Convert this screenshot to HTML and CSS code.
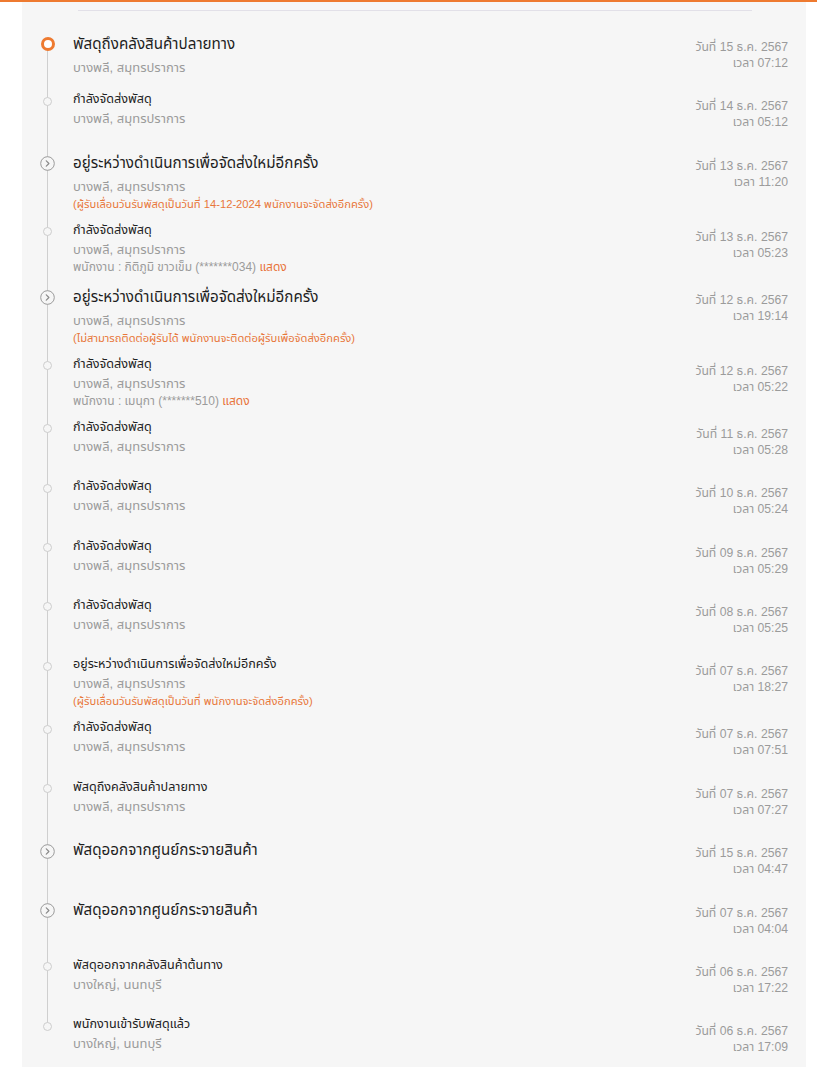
FILE: index.html
```html
<!DOCTYPE html>
<html lang="th">
<head>
<meta charset="utf-8">
<title>Tracking</title>
<link rel="stylesheet" href="styles.css">
</head>
<body>
<div class="topbar"></div>
<div class="panel">
  <div class="divider"></div>
  <div class="timeline">

    <div class="row">
      <div class="mark"><span class="dot-active"></span></div>
      <div class="info">
        <div class="title big">พัสดุถึงคลังสินค้าปลายทาง</div>
        <div class="sub">บางพลี, สมุทรปราการ</div>
      </div>
      <div class="date"><div>วันที่ 15 ธ.ค. 2567</div><div>เวลา 07:12</div></div>
    </div>

    <div class="row">
      <div class="mark"><span class="dot"></span></div>
      <div class="info">
        <div class="title">กำลังจัดส่งพัสดุ</div>
        <div class="sub">บางพลี, สมุทรปราการ</div>
      </div>
      <div class="date"><div>วันที่ 14 ธ.ค. 2567</div><div>เวลา 05:12</div></div>
    </div>

    <div class="row">
      <div class="mark"><svg class="chev" viewBox="0 0 15 15"><circle cx="7.5" cy="7.5" r="6.8"/><path d="M6.3 4.8 L8.9 7.5 L6.3 10.2"/></svg></div>
      <div class="info">
        <div class="title big">อยู่ระหว่างดำเนินการเพื่อจัดส่งใหม่อีกครั้ง</div>
        <div class="sub">บางพลี, สมุทรปราการ</div>
        <div class="note">(ผู้รับเลื่อนวันรับพัสดุเป็นวันที่ 14-12-2024 พนักงานจะจัดส่งอีกครั้ง)</div>
      </div>
      <div class="date"><div>วันที่ 13 ธ.ค. 2567</div><div>เวลา 11:20</div></div>
    </div>

    <div class="row">
      <div class="mark"><span class="dot"></span></div>
      <div class="info">
        <div class="title">กำลังจัดส่งพัสดุ</div>
        <div class="sub">บางพลี, สมุทรปราการ</div>
        <div class="emp">พนักงาน : กิติภูมิ ขาวเข็ม (*******034) <span class="show">แสดง</span></div>
      </div>
      <div class="date"><div>วันที่ 13 ธ.ค. 2567</div><div>เวลา 05:23</div></div>
    </div>

    <div class="row">
      <div class="mark"><svg class="chev" viewBox="0 0 15 15"><circle cx="7.5" cy="7.5" r="6.8"/><path d="M6.3 4.8 L8.9 7.5 L6.3 10.2"/></svg></div>
      <div class="info">
        <div class="title big">อยู่ระหว่างดำเนินการเพื่อจัดส่งใหม่อีกครั้ง</div>
        <div class="sub">บางพลี, สมุทรปราการ</div>
        <div class="note">(ไม่สามารถติดต่อผู้รับได้ พนักงานจะติดต่อผู้รับเพื่อจัดส่งอีกครั้ง)</div>
      </div>
      <div class="date"><div>วันที่ 12 ธ.ค. 2567</div><div>เวลา 19:14</div></div>
    </div>

    <div class="row">
      <div class="mark"><span class="dot"></span></div>
      <div class="info">
        <div class="title">กำลังจัดส่งพัสดุ</div>
        <div class="sub">บางพลี, สมุทรปราการ</div>
        <div class="emp">พนักงาน : เมนุกา (*******510) <span class="show">แสดง</span></div>
      </div>
      <div class="date"><div>วันที่ 12 ธ.ค. 2567</div><div>เวลา 05:22</div></div>
    </div>

    <div class="row">
      <div class="mark"><span class="dot"></span></div>
      <div class="info">
        <div class="title">กำลังจัดส่งพัสดุ</div>
        <div class="sub">บางพลี, สมุทรปราการ</div>
      </div>
      <div class="date"><div>วันที่ 11 ธ.ค. 2567</div><div>เวลา 05:28</div></div>
    </div>

    <div class="row">
      <div class="mark"><span class="dot"></span></div>
      <div class="info">
        <div class="title">กำลังจัดส่งพัสดุ</div>
        <div class="sub">บางพลี, สมุทรปราการ</div>
      </div>
      <div class="date"><div>วันที่ 10 ธ.ค. 2567</div><div>เวลา 05:24</div></div>
    </div>

    <div class="row">
      <div class="mark"><span class="dot"></span></div>
      <div class="info">
        <div class="title">กำลังจัดส่งพัสดุ</div>
        <div class="sub">บางพลี, สมุทรปราการ</div>
      </div>
      <div class="date"><div>วันที่ 09 ธ.ค. 2567</div><div>เวลา 05:29</div></div>
    </div>

    <div class="row">
      <div class="mark"><span class="dot"></span></div>
      <div class="info">
        <div class="title">กำลังจัดส่งพัสดุ</div>
        <div class="sub">บางพลี, สมุทรปราการ</div>
      </div>
      <div class="date"><div>วันที่ 08 ธ.ค. 2567</div><div>เวลา 05:25</div></div>
    </div>

    <div class="row">
      <div class="mark"><span class="dot"></span></div>
      <div class="info">
        <div class="title">อยู่ระหว่างดำเนินการเพื่อจัดส่งใหม่อีกครั้ง</div>
        <div class="sub">บางพลี, สมุทรปราการ</div>
        <div class="note">(ผู้รับเลื่อนวันรับพัสดุเป็นวันที่ พนักงานจะจัดส่งอีกครั้ง)</div>
      </div>
      <div class="date"><div>วันที่ 07 ธ.ค. 2567</div><div>เวลา 18:27</div></div>
    </div>

    <div class="row">
      <div class="mark"><span class="dot"></span></div>
      <div class="info">
        <div class="title">กำลังจัดส่งพัสดุ</div>
        <div class="sub">บางพลี, สมุทรปราการ</div>
      </div>
      <div class="date"><div>วันที่ 07 ธ.ค. 2567</div><div>เวลา 07:51</div></div>
    </div>

    <div class="row">
      <div class="mark"><span class="dot"></span></div>
      <div class="info">
        <div class="title">พัสดุถึงคลังสินค้าปลายทาง</div>
        <div class="sub">บางพลี, สมุทรปราการ</div>
      </div>
      <div class="date"><div>วันที่ 07 ธ.ค. 2567</div><div>เวลา 07:27</div></div>
    </div>

    <div class="row">
      <div class="mark"><svg class="chev" viewBox="0 0 15 15"><circle cx="7.5" cy="7.5" r="6.8"/><path d="M6.3 4.8 L8.9 7.5 L6.3 10.2"/></svg></div>
      <div class="info">
        <div class="title big">พัสดุออกจากศูนย์กระจายสินค้า</div>
      </div>
      <div class="date"><div>วันที่ 15 ธ.ค. 2567</div><div>เวลา 04:47</div></div>
    </div>

    <div class="row">
      <div class="mark"><svg class="chev" viewBox="0 0 15 15"><circle cx="7.5" cy="7.5" r="6.8"/><path d="M6.3 4.8 L8.9 7.5 L6.3 10.2"/></svg></div>
      <div class="info">
        <div class="title big">พัสดุออกจากศูนย์กระจายสินค้า</div>
      </div>
      <div class="date"><div>วันที่ 07 ธ.ค. 2567</div><div>เวลา 04:04</div></div>
    </div>

    <div class="row">
      <div class="mark"><span class="dot"></span></div>
      <div class="info">
        <div class="title">พัสดุออกจากคลังสินค้าต้นทาง</div>
        <div class="sub">บางใหญ่, นนทบุรี</div>
      </div>
      <div class="date"><div>วันที่ 06 ธ.ค. 2567</div><div>เวลา 17:22</div></div>
    </div>

    <div class="row last">
      <div class="mark"><span class="dot"></span></div>
      <div class="info">
        <div class="title">พนักงานเข้ารับพัสดุแล้ว</div>
        <div class="sub">บางใหญ่, นนทบุรี</div>
      </div>
      <div class="date"><div>วันที่ 06 ธ.ค. 2567</div><div>เวลา 17:09</div></div>
    </div>

  </div>
</div>
</body>
</html>
```
FILE: styles.css
```css
html, body {
  margin: 0;
  padding: 0;
  background: #ffffff;
}
body {
  font-family: "Liberation Sans", "Noto Sans Thai", "Noto Sans", sans-serif;
  color: #333;
}
.topbar {
  height: 2px;
  background: #ee7a30;
}
.panel {
  margin-left: 22px;
  width: 784px;
  background: #f6f6f6;
  padding: 8px 0 8px;
}
.divider {
  margin-left: 56px;
  width: 674px;
  height: 1px;
  background: #e2e0e8;
}
.timeline {
  position: relative;
  margin-top: 15px;
}
.timeline::before {
  content: "";
  position: absolute;
  left: 25px;
  top: 18px;
  bottom: 32px;
  width: 1px;
  background: #cfcfcf;
}
.row {
  display: grid;
  grid-template-columns: 51px 1fr auto;
  padding: 4px 18px 4px 0;
  min-height: 51.4px;
}
.row.last {
  min-height: 0;
}
.mark {
  display: flex;
  justify-content: center;
  align-items: flex-start;
}
.dot {
  display: block;
  width: 9px;
  height: 9px;
  box-sizing: border-box;
  border: 1px solid #cdcdcd;
  border-radius: 50%;
  background: #f6f6f6;
  margin-top: 7.5px;
  position: relative;
  z-index: 1;
}
.dot-active {
  display: block;
  width: 14px;
  height: 14px;
  box-sizing: border-box;
  border: 3px solid #ee7a30;
  border-radius: 50%;
  background: #fff;
  margin-top: 7px;
  position: relative;
  z-index: 1;
}
.chev {
  display: block;
  width: 15px;
  height: 15px;
  margin-top: 7.5px;
  position: relative;
  z-index: 1;
}
.chev circle {
  fill: #f6f6f6;
  stroke: #9a9a9a;
  stroke-width: 1;
}
.chev path {
  fill: none;
  stroke: #8a8a8a;
  stroke-width: 1.2;
  stroke-linecap: round;
  stroke-linejoin: round;
}
.title {
  font-size: 12.6px;
  line-height: 20px;
  color: #222;
}
.title.big {
  font-size: 15.2px;
  line-height: 28px;
  color: #1e1e1e;
}
.sub {
  font-size: 13px;
  line-height: 20px;
  color: #9b9b9b;
}
.emp {
  font-size: 12px;
  line-height: 15px;
  color: #9b9b9b;
}
.show {
  color: #e8733a;
}
.note {
  font-size: 11.2px;
  line-height: 15px;
  color: #e8773a;
}
.date {
  margin-top: 9px;
  text-align: right;
  font-size: 12.2px;
  line-height: 16px;
  color: #9b9b9b;
}
```
